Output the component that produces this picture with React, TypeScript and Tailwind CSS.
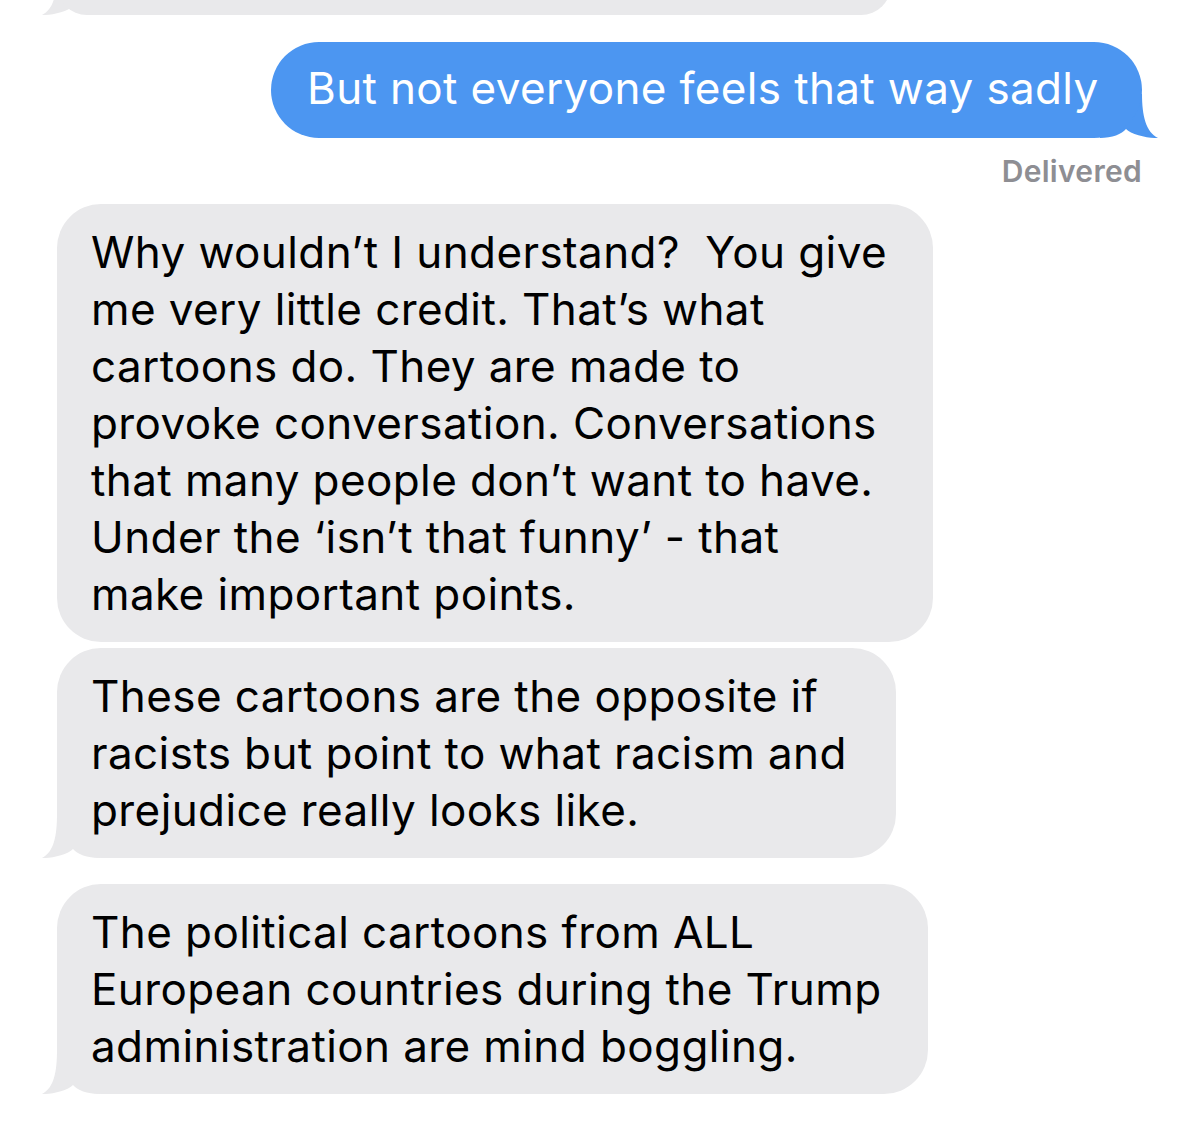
import React from 'react'

const font = { fontFamily: 'Inter, "Noto Sans", "Liberation Sans", sans-serif' }

function LeftTail() {
  return (
    <svg
      className="absolute bottom-0 left-[-15px] h-[44px] w-[58px]"
      viewBox="0 0 58 44"
      aria-hidden
    >
      <path
        d="M58 0 H15 C15 22 12 38 0 44 C8 44.5 26 41 31 35 C35 40 45 44 58 44 Z"
        fill="#e9e9eb"
      />
    </svg>
  )
}

function RightTail() {
  return (
    <svg
      className="absolute bottom-0 right-[-16px] h-[44px] w-[58px]"
      viewBox="0 0 58 44"
      aria-hidden
    >
      <path
        d="M0 0 H42 C42 22 46 38 58 44 C50 44.5 31 41 26 35 C22 40 12 44 0 44 Z"
        fill="#4c96f1"
      />
    </svg>
  )
}

function Received({ lines, width, tail }: { lines: string[]; width: number; tail?: boolean }) {
  return (
    <div className="relative ml-[57px]" style={{ width }}>
      {tail && <LeftTail />}
      <div className="relative rounded-[44px] bg-[#e9e9eb] pl-[34px] pr-4 pt-[20px] pb-[19px] text-[44px] leading-[57px] tracking-[0.4px] text-black">
        {lines.map((l, i) => (
          <div key={i} className="whitespace-pre">
            {l}
          </div>
        ))}
      </div>
    </div>
  )
}

export default function App() {
  return (
    <div className="min-h-[1131px] w-[1200px] overflow-hidden bg-white" style={font}>
      {/* previous bubble, mostly scrolled off */}
      <div className="relative ml-[57px] mt-[-45px] h-[60px] w-[834px]">
        <LeftTail />
        <div className="relative h-full rounded-[44px] bg-[#e9e9eb]" />
      </div>

      {/* sent */}
      <div className="mt-[27px] flex justify-end pr-[58px]">
        <div className="relative w-[871px]">
          <RightTail />
          <div className="relative rounded-[48px] bg-[#4c96f1] pl-[36px] pr-4 pt-[18px] pb-[21px] text-[44px] leading-[57px] tracking-[0.35px] whitespace-nowrap text-white">
            But not everyone feels that way sadly
          </div>
        </div>
      </div>
      <div className="mt-[15px] pr-[58px] text-right text-[30px] leading-[36px] font-semibold tracking-[0.3px] text-[#8e8e93]">
        Delivered
      </div>

      <div className="mt-[15px] flex flex-col">
        <Received
          width={876}
          lines={[
            'Why wouldn’t I understand?  You give',
            'me very little credit. That’s what',
            'cartoons do. They are made to',
            'provoke conversation. Conversations',
            'that many people don’t want to have.',
            'Under the ‘isn’t that funny’ - that',
            'make important points.',
          ]}
        />
        <div className="h-[6px]" />
        <Received
          width={839}
          tail
          lines={[
            'These cartoons are the opposite if',
            'racists but point to what racism and',
            'prejudice really looks like.',
          ]}
        />
        <div className="h-[26px]" />
        <Received
          width={871}
          tail
          lines={[
            'The political cartoons from ALL',
            'European countries during the Trump',
            'administration are mind boggling.',
          ]}
        />
      </div>
    </div>
  )
}
